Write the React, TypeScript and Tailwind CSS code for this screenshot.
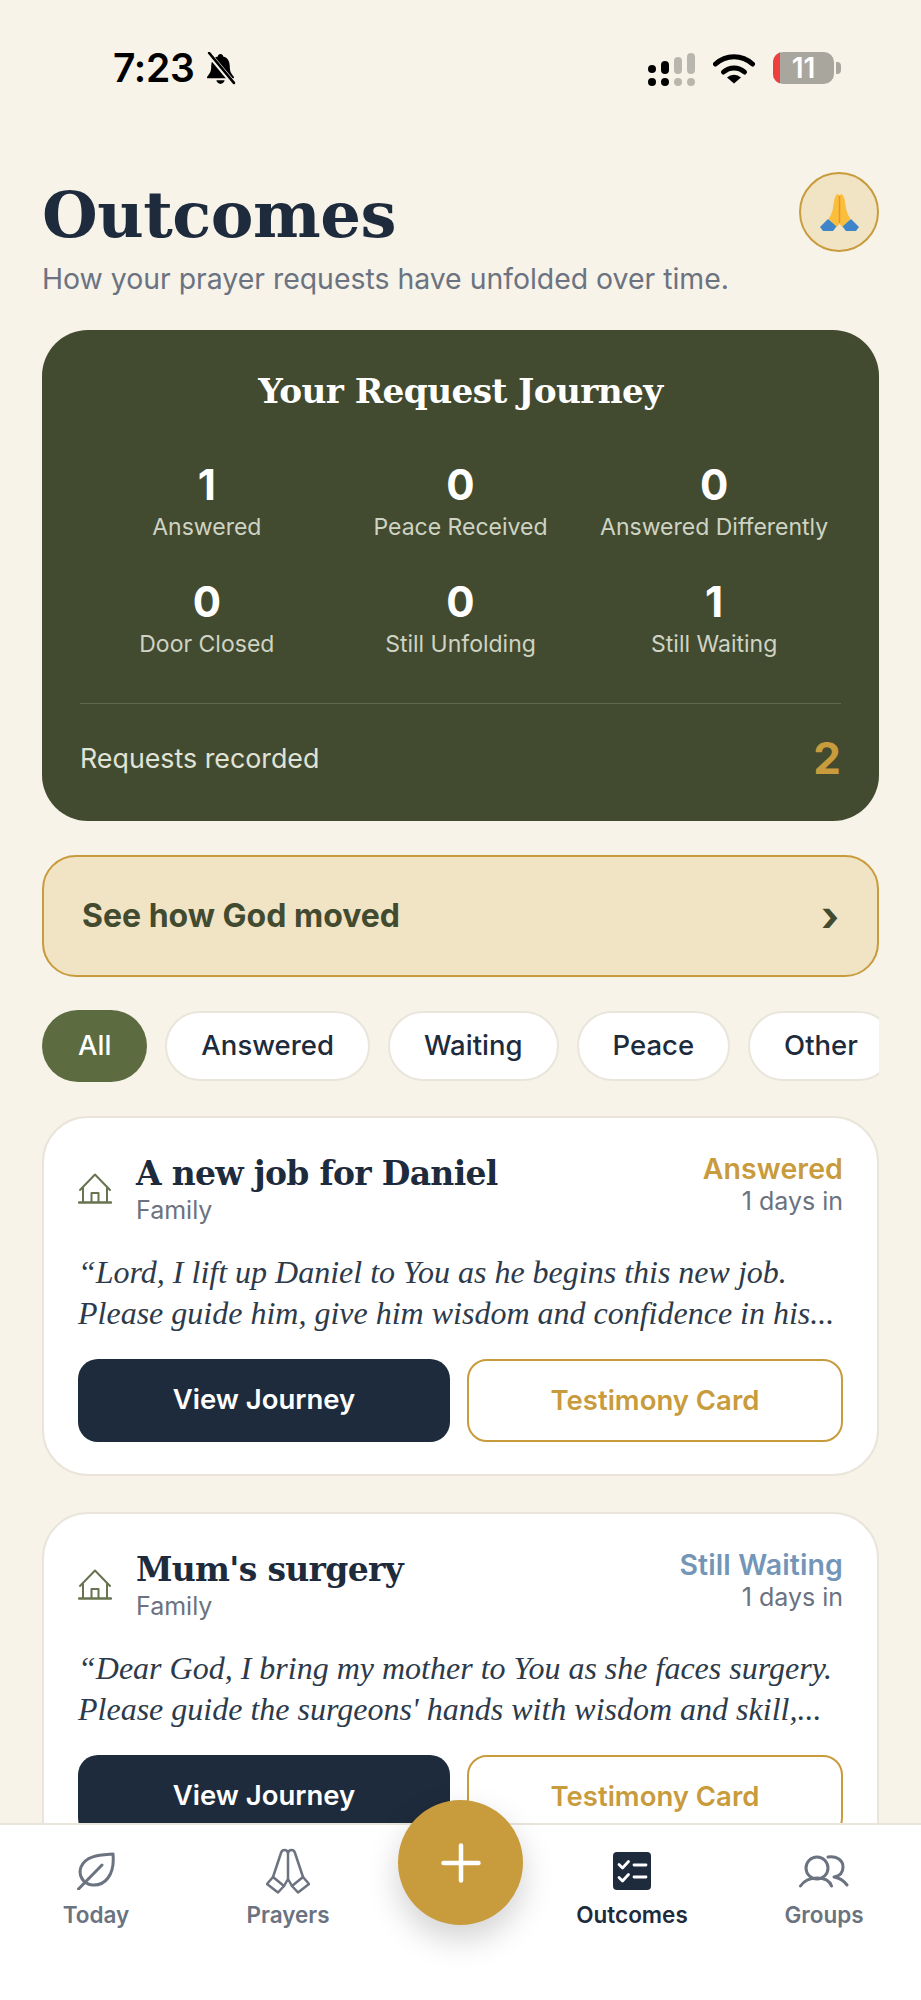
import { Plus } from "lucide-react";

const stats = [
  { value: "1", label: "Answered" },
  { value: "0", label: "Peace Received" },
  { value: "0", label: "Answered Differently" },
  { value: "0", label: "Door Closed" },
  { value: "0", label: "Still Unfolding" },
  { value: "1", label: "Still Waiting" },
];

const requests = [
  {
    title: "A new job for Daniel",
    status: "Answered",
    statusClass: "text-[#c89b3c]",
    lines: ["“Lord, I lift up Daniel to You as he begins this new job.", "Please guide him, give him wisdom and confidence in his..."],
  },
  {
    title: "Mum's surgery",
    status: "Still Waiting",
    statusClass: "text-[#7396b8]",
    lines: ["“Dear God, I bring my mother to You as she faces surgery.", "Please guide the surgeons' hands with wisdom and skill,..."],
  },
];

const StatusBar = () => (
  <div className="h-[120px] flex items-start justify-between font-['Inter'] text-black">
    <div className="flex items-center ml-[113px] mt-[50px] gap-[9px]">
      <span className="text-[39px] leading-[36px] font-semibold tracking-[-0.3px]">7:23</span>
      <svg width="33" height="33" viewBox="0 0 32 32">
        <path d="M16 2c1.500 0 2.500 1 2.600 2.300C23 5.500 25 9 25 14c0 5 1.500 7 4 10v1.500H3V24c2.500-3 4-5 4-10 0-5 2-8.500 6.400-9.700C13.500 3 14.500 2 16 2z" fill="#000" />
        <path d="M12 27.500h8c-.4 2-2 3.500-4 3.500s-3.600-1.500-4-3.500z" fill="#000" />
        <path d="M4 1l25 30" stroke="#f7f3e9" strokeWidth="5" />
        <path d="M5 1l24 29" stroke="#000" strokeWidth="2.500" strokeLinecap="round" />
      </svg>
    </div>
    <div className="flex items-start mt-[52px] mr-[80px]">
      <svg width="52" height="36" viewBox="0 0 52 36" className="mt-[1px] mr-[13px]">
        <circle cx="4" cy="16" r="4" fill="#000" />
        <rect x="13" y="8" width="8" height="13" rx="4" fill="#000" />
        <rect x="26" y="4" width="8" height="17" rx="4" fill="#b9b6ad" />
        <rect x="39" y="0" width="8" height="21" rx="4" fill="#b9b6ad" />
        <circle cx="4" cy="29" r="4" fill="#000" />
        <circle cx="17" cy="29" r="4" fill="#000" />
        <circle cx="30" cy="29" r="4" fill="#b9b6ad" />
        <circle cx="43" cy="29" r="4" fill="#b9b6ad" />
      </svg>
      <svg width="42" height="32" viewBox="0 0 42 32" className="mr-[18px]">
        <path d="M2.500 12A27 27 0 0 1 39.500 12" fill="none" stroke="#000" strokeWidth="5" strokeLinecap="round" />
        <path d="M10.500 20A15.500 15.500 0 0 1 31.500 20" fill="none" stroke="#000" strokeWidth="5" strokeLinecap="round" />
        <path d="M21 31.500L14 25.500A10 10 0 0 1 28 25.500Z" fill="#000" />
      </svg>
      <div className="flex items-center">
        <div className="relative w-[61px] h-[32px] rounded-[10px] bg-[#a9a69e] overflow-hidden flex items-center justify-center">
          <div className="absolute left-0 top-0 bottom-0 w-[7px] bg-[#ee3f3f]" />
          <span className="text-white text-[28px] leading-none font-semibold">11</span>
        </div>
        <div className="w-[5px] h-[12px] ml-[2px] rounded-r-[4px] bg-[#a9a69e]" />
      </div>
    </div>
  </div>
);

const PrayEmoji = () => (
  <svg width="39" height="37" viewBox="0 0 39 37">
    <path d="M0 33l8-8 9 7-4 5H3z" fill="#3f86c9" />
    <path d="M39 33l-8-8-9 7 4 5h10z" fill="#3f86c9" />
    <path d="M17 .5C14.500 2 14 8 13 14c-.6 4-2 7-4.500 11L17 33l2.500-3.500L22 33l8.500-8c-2.500-4-3.900-7-4.500-11-1-6-1.500-12-4-13.500-1-.5-1.800 0-2.500 1-.7-1-1.500-1.500-2.500-1z" fill="#fbbd3c" />
    <path d="M19.500 2v27" stroke="#e39a25" strokeWidth="1.500" />
  </svg>
);

const HomeIcon = () => (
  <svg width="34" height="31" viewBox="0 0 34 31" fill="none" stroke="#68734f" strokeWidth="2" strokeLinecap="round" strokeLinejoin="round" className="shrink-0">
    <path d="M2 17L17 1.500 32 17" />
    <path d="M5 15v14M29 15v14" />
    <path d="M13.500 29v-9h7v9" />
    <path d="M1 29.500h32" strokeWidth="2.500" />
  </svg>
);

const LeafIcon = () => (
  <svg width="38" height="38" viewBox="0 0 38 38" fill="none" stroke="#6b7280" strokeWidth="3" strokeLinecap="round" strokeLinejoin="round">
    <path d="M36 2C24 3 9 3 4 15c-3 8 2 17 11 18 13 1 23-10 21-31z" />
    <path d="M1.500 37L25 13" />
  </svg>
);

const PrayIcon = () => (
  <svg width="44" height="46" viewBox="0 0 44 46" fill="none" stroke="#6b7280" strokeWidth="2.500" strokeLinecap="round" strokeLinejoin="round">
    <path d="M7 29L15 5c1-4 6-4 7 0 1-4 6-4 7 0l8 24" />
    <path d="M22 5v26l-4 7M22 31l4 7" />
    <path d="M1 36l6-7 11 9-6 6.500zM43 36l-6-7-11 9 6 6.500z" />
  </svg>
);

const ChecklistIcon = () => (
  <svg width="38" height="38" viewBox="0 0 38 38" fill="none">
    <rect width="38" height="38" rx="4" fill="#1e2b3c" />
    <path d="M6 12.500l3.500 3.500 6-6.500M6 25.500l3.500 3.500 6-6.500" stroke="#fff" strokeWidth="2.800" strokeLinecap="round" strokeLinejoin="round" />
    <path d="M21 13h12M21 25h12" stroke="#fff" strokeWidth="2.800" strokeLinecap="round" />
  </svg>
);

const GroupIcon = () => (
  <svg width="50" height="33" viewBox="0 0 50 33" fill="none" stroke="#6b7280" strokeWidth="3" strokeLinecap="round" strokeLinejoin="round">
    <circle cx="18" cy="13" r="11" />
    <path d="M1.500 31c4-6 9-8 16.500-8s12.500 2 14.500 8" />
    <path d="M29 2c8-1.500 15 3 15 10 0 5-3 9-9 10 6 1 10 4 13 8" />
  </svg>
);

const navLeft = [
  { label: "Today", icon: <LeafIcon /> },
  { label: "Prayers", icon: <PrayIcon /> },
];

const navRight = [
  { label: "Outcomes", icon: <ChecklistIcon />, active: true },
  { label: "Groups", icon: <GroupIcon />, active: false },
];

const NavItem = ({ label, icon, active }: { label: string; icon: React.ReactNode; active?: boolean }) => (
  <div className="w-[192px] flex flex-col items-center">
    <div className="h-[48px] flex items-center justify-center">{icon}</div>
    <span className={`mt-[6px] text-[22.5px] leading-[28px] font-semibold ${active ? "text-[#1e2b3c]" : "text-[#6b7280]"}`}>
      {label}
    </span>
  </div>
);

const RequestCard = ({ title, status, statusClass, lines }: (typeof requests)[number]) => (
  <div className="h-[360px] shrink-0 rounded-[46px] bg-white border-2 border-[#e9e5da] px-[34px] pt-[34px]">
    <div className="h-[74px] flex items-start justify-between">
      <div className="flex items-center">
        <HomeIcon />
        <div className="ml-[24px]">
          <div className="font-['DejaVu_Serif'] font-bold text-[33px] leading-[44px] tracking-[-0.7px] text-[#1e2b3c]">{title}</div>
          <div className="text-[25px] leading-[28px] text-[#6b7280]">Family</div>
        </div>
      </div>
      <div className="text-right">
        <div className={`text-[28.5px] leading-[34px] font-semibold ${statusClass} tracking-[0.1px]`}>{status}</div>
        <div className="text-[25px] leading-[30px] text-[#6b7280]">1 days in</div>
      </div>
    </div>
    <div className="mt-[26px] font-['Liberation_Serif'] italic text-[32px] leading-[41px] text-[#2d3a4a] whitespace-nowrap">
      {lines.map((line) => (
        <div key={line}>{line}</div>
      ))}
    </div>
    <div className="mt-[25px] flex gap-[17px]">
      <div className="w-[373px] h-[83px] pb-[2px] rounded-[20px] bg-[#1e2b3c] flex items-center justify-center text-white text-[27.5px] font-semibold">
        View Journey
      </div>
      <div className="w-[377px] h-[83px] rounded-[20px] border-2 border-[#c89b3c] flex items-center justify-center text-[#c89b3c] text-[27.5px] font-semibold">
        Testimony Card
      </div>
    </div>
  </div>
);

export default function App() {
  return (
    <div className="relative h-[2000px] overflow-hidden bg-[#f7f3e9] font-['Inter']">
      <StatusBar />

      <main className="px-[42px]">
        {/* Header */}
        <div className="flex items-start justify-between pt-[52px] h-[210px]">
          <div className="mt-[3px]">
            <h1 className="font-['DejaVu_Serif'] font-bold text-[64px] leading-[80px] tracking-[-0.5px] text-[#1e2b3c]">Outcomes</h1>
            <p className="mt-[7px] text-[28.4px] leading-[34px] text-[#6b7280]">How your prayer requests have unfolded over time.</p>
          </div>
          <div className="w-[80px] h-[80px] rounded-full border-2 border-[#c89b3c] bg-[#f0e4c5] flex items-center justify-center">
            <PrayEmoji />
          </div>
        </div>

        {/* Journey summary */}
        <section className="h-[491px] rounded-[46px] bg-[#424b2f] px-[38px] pt-[39px]">
          <h2 className="text-center font-['DejaVu_Serif'] font-bold text-[34.3px] leading-[44px] tracking-[-0.6px] text-white">Your Request Journey</h2>
          <div className="mt-[48px] grid grid-cols-3 gap-y-[37px]">
            {stats.map((stat) => (
              <div key={stat.label} className="flex flex-col items-center">
                <span className="text-[42px] leading-[48px] font-bold text-white">{stat.value}</span>
                <span className="mt-[4px] text-[23px] leading-[28px] text-[#cfd3c4] whitespace-nowrap">{stat.label}</span>
              </div>
            ))}
          </div>
          <div className="mt-[45px] border-t border-[#5f6a4c] pt-[24px] flex items-center justify-between">
            <span className="text-[26.800px] leading-[60px] text-[#e1e3d8]">Requests recorded</span>
            <span className="text-[44px] leading-[60px] font-bold text-[#c89b3c]">2</span>
          </div>
        </section>

        <div className="mt-[34px] h-[122px] rounded-[34px] border-2 border-[#c89b3c] bg-[#f0e4c5] pl-[38px] pr-[38px] flex items-center justify-between">
          <span className="text-[32px] font-bold text-[#424b2f]">See how God moved</span>
          <span className="text-[42px] leading-none font-bold text-[#424b2f]">›</span>
        </div>

        {/* Filters */}
        <div className="mt-[33px] flex items-center gap-[18px] overflow-hidden text-[27.5px] font-medium">
          <div className="h-[72px] px-[36px] shrink-0 rounded-full bg-[#5c6b40] text-white flex items-center">All</div>
          {["Answered", "Waiting", "Peace", "Other"].map((filter) => (
            <div key={filter} className="h-[70px] px-[34px] shrink-0 rounded-full bg-white border-2 border-[#e9e5da] text-[#1e2b3c] flex items-center">
              {filter}
            </div>
          ))}
        </div>

        <div className="mt-[34px] flex flex-col gap-[36px]">
          {requests.map((request) => (
            <RequestCard key={request.title} {...request} />
          ))}
        </div>
      </main>

      {/* Bottom nav */}
      <nav className="absolute left-0 right-0 top-[1823px] bottom-0 bg-white border-t-2 border-[#e9e5da] pt-[22px] flex">
        {navLeft.map((item) => (
          <NavItem key={item.label} label={item.label} icon={item.icon} />
        ))}
        <div className="w-[152px]" />
        {navRight.map((item) => (
          <NavItem key={item.label} {...item} />
        ))}
      </nav>
      <div className="absolute left-[398px] top-[1800px] w-[125px] h-[125px] rounded-full bg-[#c89b3c] flex items-center justify-center shadow-[0_14px_32px_rgba(0,0,0,0.18)]">
        <Plus size={60} strokeWidth={1.8} className="text-white" />
      </div>
    </div>
  );
}
